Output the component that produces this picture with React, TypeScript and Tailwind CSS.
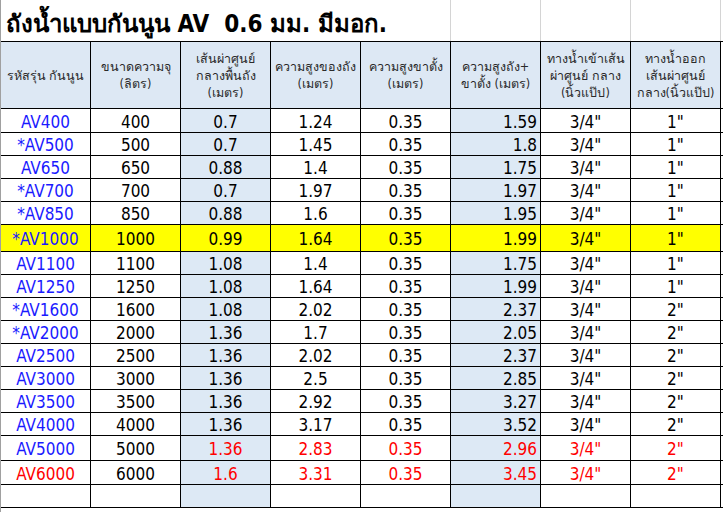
import React from 'react';

type Row = {
  model: string;
  cap: string;
  dia: string;
  tank: string;
  leg: string;
  total: string;
  inlet: string;
  outlet: string;
  h: string;
  yellow?: boolean;
  red?: 'partial' | 'all';
};

const rows: Row[] = [
  { model: 'AV400', cap: '400', dia: '0.7', tank: '1.24', leg: '0.35', total: '1.59', inlet: '3/4"', outlet: '1"', h: 'h-[24px]' },
  { model: '*AV500', cap: '500', dia: '0.7', tank: '1.45', leg: '0.35', total: '1.8', inlet: '3/4"', outlet: '1"', h: 'h-[23px]' },
  { model: 'AV650', cap: '650', dia: '0.88', tank: '1.4', leg: '0.35', total: '1.75', inlet: '3/4"', outlet: '1"', h: 'h-[23px]' },
  { model: '*AV700', cap: '700', dia: '0.7', tank: '1.97', leg: '0.35', total: '1.97', inlet: '3/4"', outlet: '1"', h: 'h-[23px]' },
  { model: '*AV850', cap: '850', dia: '0.88', tank: '1.6', leg: '0.35', total: '1.95', inlet: '3/4"', outlet: '1"', h: 'h-[23px]' },
  { model: '*AV1000', cap: '1000', dia: '0.99', tank: '1.64', leg: '0.35', total: '1.99', inlet: '3/4"', outlet: '1"', h: 'h-[27px]', yellow: true },
  { model: 'AV1100', cap: '1100', dia: '1.08', tank: '1.4', leg: '0.35', total: '1.75', inlet: '3/4"', outlet: '1"', h: 'h-[23px]' },
  { model: 'AV1250', cap: '1250', dia: '1.08', tank: '1.64', leg: '0.35', total: '1.99', inlet: '3/4"', outlet: '1"', h: 'h-[23px]' },
  { model: '*AV1600', cap: '1600', dia: '1.08', tank: '2.02', leg: '0.35', total: '2.37', inlet: '3/4"', outlet: '2"', h: 'h-[23px]' },
  { model: '*AV2000', cap: '2000', dia: '1.36', tank: '1.7', leg: '0.35', total: '2.05', inlet: '3/4"', outlet: '2"', h: 'h-[23px]' },
  { model: 'AV2500', cap: '2500', dia: '1.36', tank: '2.02', leg: '0.35', total: '2.37', inlet: '3/4"', outlet: '2"', h: 'h-[23px]' },
  { model: 'AV3000', cap: '3000', dia: '1.36', tank: '2.5', leg: '0.35', total: '2.85', inlet: '3/4"', outlet: '2"', h: 'h-[23px]' },
  { model: 'AV3500', cap: '3500', dia: '1.36', tank: '2.92', leg: '0.35', total: '3.27', inlet: '3/4"', outlet: '2"', h: 'h-[23px]' },
  { model: 'AV4000', cap: '4000', dia: '1.36', tank: '3.17', leg: '0.35', total: '3.52', inlet: '3/4"', outlet: '2"', h: 'h-[23px]' },
  { model: 'AV5000', cap: '5000', dia: '1.36', tank: '2.83', leg: '0.35', total: '2.96', inlet: '3/4"', outlet: '2"', h: 'h-[25px]', red: 'partial' },
  { model: 'AV6000', cap: '6000', dia: '1.6', tank: '3.31', leg: '0.35', total: '3.45', inlet: '3/4"', outlet: '2"', h: 'h-[24px]', red: 'all' },
];

const headers = [
  ['รหัสรุ่น กันนูน'],
  ['ขนาดความจุ', '(ลิตร)'],
  ['เส้นผ่าศูนย์', 'กลางพื้นถัง', '(เมตร)'],
  ['ความสูงของถัง', '(เมตร)'],
  ['ความสูงขาตั้ง', '(เมตร)'],
  ['ความสูงถัง+', 'ขาตั้ง (เมตร)'],
  ['ทางน้ำเข้าเส้น', 'ผ่าศูนย์ กลาง', '(นิ้วแป๊ป)'],
  ['ทางน้ำออก', 'เส้นผ่าศูนย์', 'กลาง(นิ้วแป๊ป)'],
];

const grid = 'grid grid-cols-[90px_90px_90px_90px_90px_90px_90px_90px_3px]';

const App: React.FC = () => {
  return (
    <div
      className="w-[723px] h-[512px] overflow-hidden bg-white border-l border-[#a0a0a0]"
      style={{ fontFamily: 'Tahoma, "DejaVu Sans Condensed", "Noto Sans", sans-serif' }}
    >
      {/* Title */}
      <div className={`${grid} h-[41px]`}>
        <div className="col-span-5 border-r border-[#d4d4d4] flex items-end pl-[5px] pb-[5px] text-[24px] font-bold text-black leading-none whitespace-nowrap">
          ถังน้ำแบบกันนูน AV&nbsp;&nbsp;0.6 มม. มีมอก.
        </div>
        <div className="border-r border-[#d4d4d4]" />
        <div className="border-r border-[#d4d4d4]" />
        <div className="border-r border-[#d4d4d4]" />
        <div />
      </div>

      {/* Header */}
      <div className={`${grid} h-[68px] border-t border-b border-black`}>
        {headers.map((lines, i) => (
          <div
            key={i}
            className="bg-[#dde8f4] border-r border-black flex flex-col items-center justify-center text-[12.5px] leading-[17px] text-[#2a2a2a] text-center"
          >
            {lines.map((l, j) => (
              <span key={j} className="whitespace-nowrap">{l}</span>
            ))}
          </div>
        ))}
        <div />
      </div>

      {/* Data */}
      {rows.map((r) => {
        const redAll = r.red === 'all';
        const redPart = r.red === 'partial' || redAll;
        const num = redPart ? 'text-[#ff0000]' : 'text-black';
        const band = r.yellow ? 'bg-[#ffff00]' : 'bg-[#dde9f5]';
        const plain = r.yellow ? 'bg-[#ffff00]' : 'bg-white';
        const cell = 'border-r border-black flex items-center pt-[3px] text-[17px] leading-none';
        return (
          <div key={r.model} className={`${grid} ${r.h} border-b border-black`}>
            <div className={`${cell} ${plain} justify-center ${redAll ? 'text-[#ff0000]' : 'text-[#1a1aff]'}`}>{r.model}</div>
            <div className={`${cell} ${plain} justify-center text-black`}>{r.cap}</div>
            <div className={`${cell} ${band} justify-center ${num}`}>{r.dia}</div>
            <div className={`${cell} ${plain} justify-center ${num}`}>{r.tank}</div>
            <div className={`${cell} ${plain} justify-center ${num}`}>{r.leg}</div>
            <div className={`${cell} ${band} justify-end pr-[3px] ${num}`}>{r.total}</div>
            <div className={`${cell} ${plain} justify-center ${num}`}>{r.inlet}</div>
            <div className={`${cell} ${plain} justify-center ${num}`}>{r.outlet}</div>
            <div className="bg-white" />
          </div>
        );
      })}

      {/* Empty row */}
      <div className={`${grid} h-[23px] border-b border-black`}>
        <div className="border-r border-black" />
        <div className="border-r border-black" />
        <div className="border-r border-black bg-[#dde9f5]" />
        <div className="border-r border-black" />
        <div className="border-r border-black" />
        <div className="border-r border-black bg-[#dde9f5]" />
        <div className="border-r border-black" />
        <div className="border-r border-black" />
        <div />
      </div>
    </div>
  );
};

export default App;
